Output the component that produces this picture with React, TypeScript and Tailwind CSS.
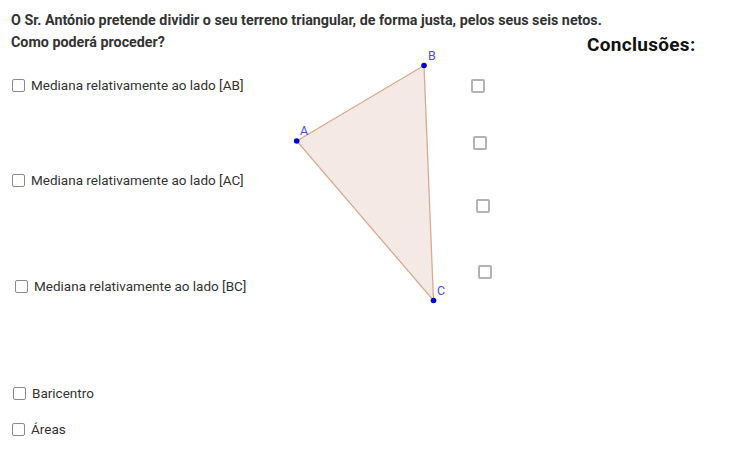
import React from "react";

function Box({ thick }: { thick?: boolean }) {
  return (
    <span
      className={
        "block rounded-[2px] bg-white " +
        (thick
          ? "w-[14px] h-[14px] border-2 border-[#b3b3b3]"
          : "w-[13px] h-[13px] border border-[#8a8a8a]")
      }
    />
  );
}

function Check({ x, y, label }: { x: number; y: number; label: string }) {
  return (
    <div className="absolute flex items-center gap-[6px]" style={{ left: x, top: y }}>
      <Box />
      <span className="text-[13.5px] text-[#333] leading-none">{label}</span>
    </div>
  );
}

export default function App() {
  const A = [296.7, 141];
  const B = [424, 65.5];
  const C = [433.5, 300.5];
  return (
    <div className="relative w-[733px] h-[460px] bg-white overflow-hidden font-['Roboto',sans-serif]">
      <div className="absolute left-[11px] top-[9px] text-[14.3px] font-bold text-[#333] leading-[22px]">
        <div>O Sr. António pretende dividir o seu terreno triangular, de forma justa, pelos seus seis netos.</div>
        <div>Como poderá proceder?</div>
      </div>
      <div className="absolute left-[587px] top-[35px] text-[19px] font-bold text-[#111] leading-none tracking-[0.3px]">
        Conclusões:
      </div>

      <svg className="absolute left-0 top-0" width={733} height={460}>
        <polygon
          points={`${A[0]},${A[1]} ${B[0]},${B[1]} ${C[0]},${C[1]}`}
          fill="#f4e9e4"
          stroke="#d7aa91"
          strokeWidth={1.3}
        />
        {[A, B, C].map((p, i) => (
          <circle key={i} cx={p[0]} cy={p[1]} r={2.8} fill="#0000d0" />
        ))}
        <text x={300} y={135} fontSize={12.5} fill="#4a4aff" fontFamily="Roboto, sans-serif">A</text>
        <text x={428} y={60} fontSize={12.5} fill="#4a4aff" fontFamily="Roboto, sans-serif">B</text>
        <text x={437} y={295} fontSize={12.5} fill="#4a4aff" fontFamily="Roboto, sans-serif">C</text>
      </svg>

      <Check x={12} y={79} label="Mediana relativamente ao lado [AB]" />
      <Check x={12} y={174} label="Mediana relativamente ao lado [AC]" />
      <Check x={15} y={280} label="Mediana relativamente ao lado [BC]" />
      <Check x={13} y={387} label="Baricentro" />
      <Check x={12} y={423} label="Áreas" />

      <div className="absolute left-[471px] top-[79px]"><Box thick /></div>
      <div className="absolute left-[473px] top-[136px]"><Box thick /></div>
      <div className="absolute left-[476px] top-[199px]"><Box thick /></div>
      <div className="absolute left-[478px] top-[265px]"><Box thick /></div>
    </div>
  );
}
